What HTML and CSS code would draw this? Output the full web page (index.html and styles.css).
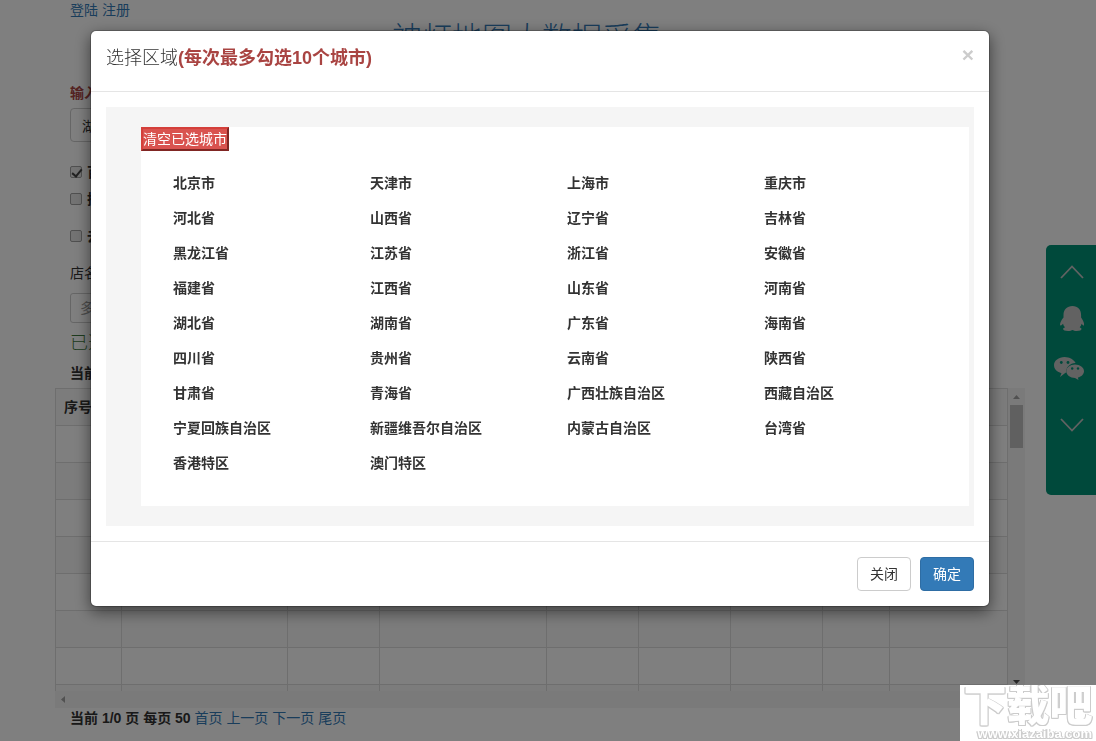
FILE: index.html
```html
<!DOCTYPE html>
<html lang="zh-CN">
<head>
<meta charset="utf-8">
<title>神灯地图大数据采集</title>
<link rel="stylesheet" href="styles.css">
</head>
<body>
<main class="container">
  <nav class="account"><a href="#">登陆</a> <a href="#">注册</a></nav>
  <h1 class="page-title">神灯地图大数据采集</h1>
  <form class="search">
    <label class="field-label danger" for="city">输入</label>
    <input class="field" id="city" type="text" value="湖">
    <label class="check"><input type="checkbox" checked> <span>百</span></label>
    <label class="check near"><input type="checkbox"> <span>搜</span></label>
    <label class="check"><input type="checkbox"> <span>去</span></label>
    <label class="shop-label" for="shop">店名</label>
    <input class="field small" id="shop" type="text" placeholder="多">
    <p class="status">已选</p>
    <p class="current">当前</p>
  </form>
  <div class="scroller">
    <div class="viewport">
      <table class="grid">
        <colgroup><col class="c1"><col class="c2"><col class="c3"><col class="c4"><col class="c3"><col class="c3"><col class="c3"><col class="c5"><col class="c6"></colgroup>
        <thead><tr><th>序号</th><th></th><th></th><th></th><th></th><th></th><th></th><th></th><th></th></tr></thead>
        <tbody>
          <tr><td></td><td></td><td></td><td></td><td></td><td></td><td></td><td></td><td></td></tr>
          <tr><td></td><td></td><td></td><td></td><td></td><td></td><td></td><td></td><td></td></tr>
          <tr><td></td><td></td><td></td><td></td><td></td><td></td><td></td><td></td><td></td></tr>
          <tr><td></td><td></td><td></td><td></td><td></td><td></td><td></td><td></td><td></td></tr>
          <tr><td></td><td></td><td></td><td></td><td></td><td></td><td></td><td></td><td></td></tr>
          <tr><td></td><td></td><td></td><td></td><td></td><td></td><td></td><td></td><td></td></tr>
          <tr><td></td><td></td><td></td><td></td><td></td><td></td><td></td><td></td><td></td></tr>
          <tr><td></td><td></td><td></td><td></td><td></td><td></td><td></td><td></td><td></td></tr>
        </tbody>
      </table>
    </div>
    <div class="vbar">
      <svg width="17" height="17" viewBox="0 0 17 17"><path d="M5 11h7L8.500 7z" fill="#a3a3a3"/></svg>
      <div class="thumb"></div>
      <svg class="down" width="17" height="17" viewBox="0 0 17 17"><path d="M5 6h7l-3.500 4z" fill="#505050"/></svg>
    </div>
    <div class="hbar"><svg width="17" height="17" viewBox="0 0 17 17"><path d="M10 5v7L6 8.500z" fill="#a3a3a3"/></svg></div>
  </div>
  <p class="pager"><b>当前 1/0 页 每页 50</b> <a href="#">首页</a> <a href="#">上一页</a> <a href="#">下一页</a> <a href="#">尾页</a></p>
</main>

<aside class="side">
  <svg width="24" height="14" viewBox="0 0 24 14"><path d="M1 13L12 1.500 23 13" fill="none" stroke="#c4c4c4" stroke-width="1.800"/></svg>
  <svg class="qq" width="24" height="25" viewBox="0 0 24 25"><path d="M12.500 0C7 0 3.500 3.500 3.500 9v2.500C1.500 14 0 16.500 0 18.500c0 1 .5 1.200 1 .9.800-.4 1.300-1 2-1.700.3 1.300 1 2.500 2 3.600-1.200.5-1.900 1-1.900 1.700C3.100 24.300 5 25 8 25c2 0 3.700-.5 4.500-1 .8.500 2.400 1 4.300 1 3 0 4.700-.7 4.700-2 0-.7-.7-1.200-1.800-1.700 1-1.100 1.600-2.300 1.900-3.600.6.700 1.100 1.300 1.700 1.700.4.300.8 0 .8-.9 0-2-1.400-4.500-3-7V9c0-5.500-3.200-9-8.600-9z" fill="#c4c4c4"/></svg>
  <svg class="wx" width="30" height="24" viewBox="0 0 30 24"><path d="M10.500 0C4.700 0 0 3.600 0 8.300c0 2.700 1.500 5 4 6.500l3.500 1.500L6 20l5.500-4.200c.4 0 .3 0 .8-.1-.9-5.300 4.200-9.800 9.300-9.700C20 2.800 15.700 0 10.500 0z" fill="#c4c4c4"/><path d="M21 7.500c-4.900 0-8.700 3-8.700 6.700s3.800 6.700 8.700 6.700l3.500 2.100-.6-2.500c3.600-.9 6.100-3.400 6.100-6.300 0-3.700-4-6.700-9-6.700z" fill="#c4c4c4"/><g fill="#009277"><circle cx="7.300" cy="5.500" r="1.400"/><circle cx="14" cy="5.500" r="1.400"/><circle cx="18.200" cy="11.500" r="1.200"/><circle cx="24" cy="11.500" r="1.200"/></g></svg>
  <svg width="24" height="14" viewBox="0 0 24 14"><path d="M1 1l11 11.500L23 1" fill="none" stroke="#c4c4c4" stroke-width="1.800"/></svg>
</aside>

<div class="backdrop"></div>
<div class="modal-wrap">
  <section class="modal" role="dialog" aria-labelledby="modal-title">
    <header class="modal-header">
      <h4 class="modal-title" id="modal-title">选择区域<b>(每次最多勾选10个城市)</b></h4>
      <button class="close" type="button" aria-label="关闭窗口">×</button>
    </header>
    <div class="modal-body">
      <div class="well">
        <div class="panel">
          <button class="clear" type="button">清空已选城市</button>
          <ul class="regions">
            <li>北京市</li><li>天津市</li><li>上海市</li><li>重庆市</li>
            <li>河北省</li><li>山西省</li><li>辽宁省</li><li>吉林省</li>
            <li>黑龙江省</li><li>江苏省</li><li>浙江省</li><li>安徽省</li>
            <li>福建省</li><li>江西省</li><li>山东省</li><li>河南省</li>
            <li>湖北省</li><li>湖南省</li><li>广东省</li><li>海南省</li>
            <li>四川省</li><li>贵州省</li><li>云南省</li><li>陕西省</li>
            <li>甘肃省</li><li>青海省</li><li>广西壮族自治区</li><li>西藏自治区</li>
            <li>宁夏回族自治区</li><li>新疆维吾尔自治区</li><li>内蒙古自治区</li><li>台湾省</li>
            <li>香港特区</li><li>澳门特区</li>
          </ul>
        </div>
      </div>
    </div>
    <footer class="modal-footer">
      <button class="btn" type="button">关闭</button>
      <button class="btn primary" type="button">确定</button>
    </footer>
  </section>
</div>

<div class="watermark"><strong>下载吧</strong><span>www.xiazaiba.com</span></div>
</body>
</html>
```
FILE: styles.css
```css
* { box-sizing: border-box; }
html { height: 100%; overflow: hidden; }
body {
  margin: 0;
  padding-right: 16px;
  background: #fff;
  color: #333;
  font: 14px/20px "Liberation Sans", "Noto Sans CJK SC", sans-serif;
}
button, input { font-family: inherit; font-size: 14px; }
a { color: #337ab7; text-decoration: none; }
p { margin: 0; }

.container { max-width: 970px; margin: 0 auto; }
.account, .search, .pager { padding: 0 15px; }
.page-title {
  margin: 0 0 27px;
  padding-right: 26px;
  color: #337ab7;
  font-size: 30px;
  font-weight: 300;
  line-height: 36px;
  text-align: center;
}
.search { display: flex; flex-direction: column; align-items: flex-start; }
.field-label { font-weight: 700; margin-bottom: 5px; }
.danger { color: #a94442; }
.field {
  width: 180px;
  height: 34px;
  margin-bottom: 20px;
  padding: 0 11px;
  border: 1px solid #ccc;
  border-radius: 4px;
  background: #fff;
  color: #333;
}
.field.small { height: 30px; margin-bottom: 10px; padding: 0 9px; border-radius: 3px; }
.field::placeholder { color: #999; }
.check { display: flex; gap: 5px; margin-bottom: 17px; font-weight: 700; }
.check:has(+ .near) { margin-bottom: 7px; }
.check input {
  appearance: none;
  width: 12px;
  height: 12px;
  margin: 4px 0;
  border: 1px solid #a0a0a0;
  border-radius: 2px;
  background: #e6e6e6;
}
.check input:checked::before {
  content: "";
  display: block;
  width: 4px;
  height: 8px;
  margin-left: 3px;
  border: solid #444;
  border-width: 0 2px 2px 0;
  transform: rotate(40deg);
}
.shop-label { margin-bottom: 10px; }
.status { margin-bottom: 10px; color: #3c763d; font-size: 18px; font-weight: 300; }
.current { margin-bottom: 5px; font-weight: 700; }

.scroller { display: grid; grid-template-columns: 1fr 17px; grid-template-rows: 303px 17px; background: #f5f5f5; }
.viewport { overflow: hidden; background: #fff; }
.grid { width: 100%; table-layout: fixed; border-collapse: collapse; }
.grid th, .grid td { height: 37px; padding: 0 8px; border: 1px solid #ddd; text-align: left; white-space: nowrap; }
.grid thead tr, .grid tbody tr:nth-child(even) { background: #f9f9f9; }
.c1 { width: 66px; }
.c2 { width: 166px; }
.c3 { width: 92px; }
.c4 { width: 167px; }
.c5 { width: 67px; }
.vbar { display: flex; flex-direction: column; }
.vbar .thumb { height: 43px; margin: 0 2px; background: #c1c1c1; }
.vbar .down { margin-top: auto; }
.hbar { grid-column: 1 / 3; }
.hbar svg, .vbar svg { display: block; }

.side {
  position: fixed;
  top: 245px;
  right: 0;
  width: 50px;
  height: 250px;
  padding: 20px 0 0 1px;
  display: flex;
  flex-direction: column;
  align-items: center;
  border-radius: 5px 0 0 5px;
  background: #009277;
}
.side .qq { margin: 27px 0 26px; }
.side .wx { margin: 0 6px 37px 0; }

.backdrop { position: fixed; inset: 0; background: rgba(0, 0, 0, .5); }
.modal-wrap { position: fixed; inset: 0; padding: 30px 16px 30px 0; }
.modal {
  max-width: 900px;
  margin: 0 auto;
  border: 1px solid rgba(0, 0, 0, .2);
  border-radius: 6px;
  background: #fff;
  background-clip: padding-box;
  box-shadow: 0 5px 15px rgba(0, 0, 0, .5);
}
.modal-header {
  display: flex;
  justify-content: space-between;
  align-items: flex-start;
  padding: 15px 15px 21px;
  border-bottom: 1px solid #e5e5e5;
}
.modal-title { margin: 0; font-size: 18px; font-weight: 300; line-height: 24px; }
.modal-title b { color: #a94442; font-weight: 700; }
.close { padding: 0; border: 0; background: none; color: #ccc; font-size: 21px; font-weight: 700; line-height: 18px; }
.modal-body { padding: 15px; }
.well { padding: 20px 5px 20px 35px; background: #f5f5f5; }
.panel { padding-bottom: 25px; background: #fff; }
.clear {
  display: block;
  height: 24px;
  padding: 0;
  border: 2px outset #d43f3a;
  background: #d9534f;
  color: #fff;
  line-height: 20px;
}
.regions {
  display: grid;
  grid-template-columns: repeat(4, 1fr);
  grid-auto-rows: 35px;
  margin: 15px 0 0;
  padding: 0 8px 0 32px;
  list-style: none;
  font-weight: 700;
  line-height: 35px;
}
.modal-footer { display: flex; justify-content: flex-end; gap: 9px; padding: 15px; border-top: 1px solid #e5e5e5; }
.btn { min-width: 54px; height: 34px; padding: 0 12px; border: 1px solid #ccc; border-radius: 4px; background: #fff; color: #333; line-height: 20px; }
.btn.primary { border-color: #2e6da4; background: #337ab7; color: #fff; }

.watermark {
  position: fixed;
  right: 0;
  bottom: 0;
  width: 136px;
  height: 56px;
  display: flex;
  flex-direction: column;
  overflow: hidden;
  background: #fff;
  color: #fff;
}
.watermark strong, .watermark span {
  filter: drop-shadow(1px 0 #ccc) drop-shadow(-1px 0 #ccc) drop-shadow(0 1px #ccc);
}
.watermark strong {
  font-size: 43px;
  font-weight: 900;
  line-height: 42px;
  text-align: center;
}
.watermark span {
  padding-right: 4px;
  font-size: 13px;
  font-weight: 700;
  line-height: 14px;
  text-align: right;
}
```
